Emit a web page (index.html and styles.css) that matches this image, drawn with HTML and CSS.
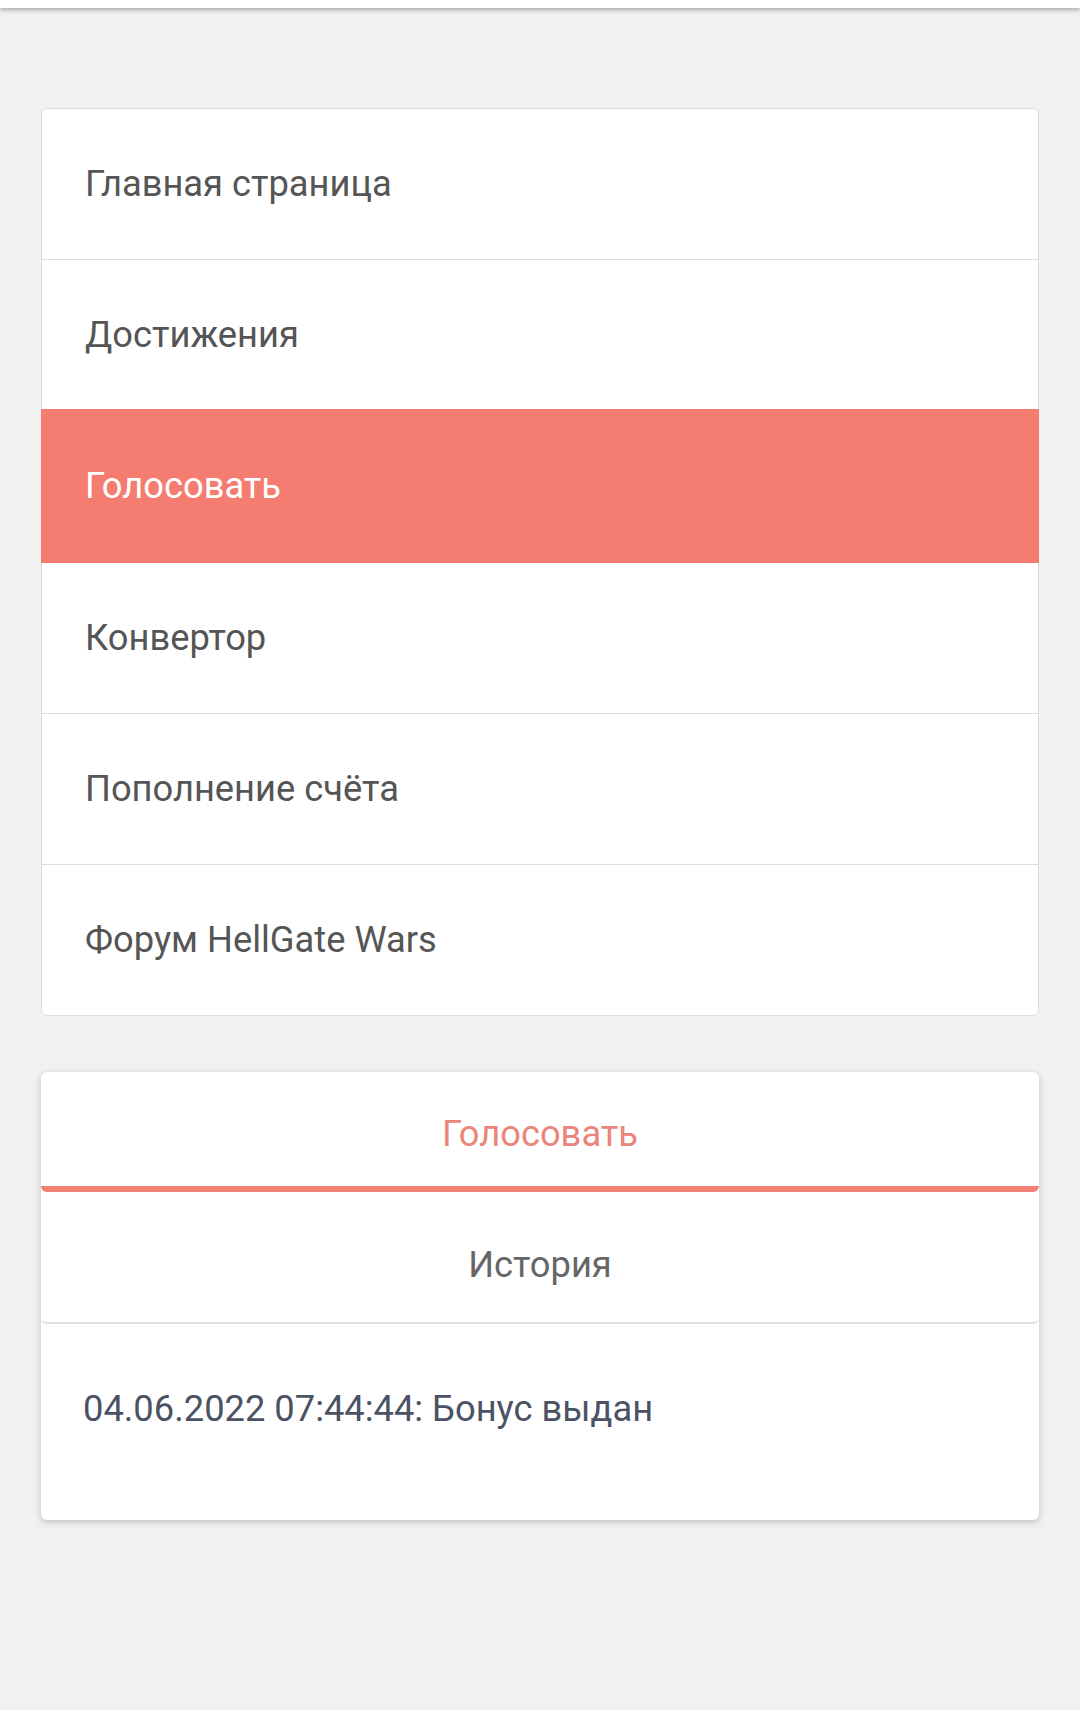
FILE: index.html
```html
<!DOCTYPE html>
<html lang="ru">
<head>
<meta charset="utf-8">
<title>Голосовать</title>
<link rel="stylesheet" href="styles.css">
</head>
<body>
<div class="topbar"></div>
<main class="page">
  <nav class="menu">
    <a class="menu-item">Главная страница</a>
    <a class="menu-item">Достижения</a>
    <a class="menu-item active">Голосовать</a>
    <a class="menu-item">Конвертор</a>
    <a class="menu-item">Пополнение счёта</a>
    <a class="menu-item">Форум HellGate Wars</a>
  </nav>
  <section class="panel">
    <div class="tab tab-active">Голосовать</div>
    <div class="tab tab-plain">История</div>
    <div class="panel-body">04.06.2022 07:44:44: Бонус выдан</div>
  </section>
</main>
</body>
</html>
```
FILE: styles.css
```css
html, body {
  margin: 0;
  padding: 0;
}
body {
  background: #f1f1f1;
  font-family: Roboto, "Noto Sans", "Liberation Sans", sans-serif;
  min-height: 1710px;
}
.topbar {
  height: 8px;
  background: #ffffff;
  box-shadow: 0 2px 4px rgba(0, 0, 0, 0.3);
  position: relative;
  z-index: 2;
}
.page {
  padding: 100px 41px 0;
}
.menu {
  background: #ffffff;
  border: 1px solid #dcdcdc;
  border-radius: 6px;
  display: flex;
  flex-direction: column;
}
.menu-item {
  display: flex;
  align-items: center;
  height: 148px;
  padding: 0 0 2px 43px;
  border-top: 1px solid #dcdcdc;
  color: #555555;
  font-size: 36.3px;
  text-decoration: none;
}
.menu-item:first-child {
  border-top: none;
}
.menu-item.active {
  background: #f47c70;
  border-top-color: #f47c70;
  color: #ffffff;
  height: 151px;
  margin: -1px -1px -1px;
  padding-left: 44px;
  position: relative;
  z-index: 1;
}
.panel {
  margin-top: 56px;
  background: #ffffff;
  border-radius: 6px;
  box-shadow: 0 2px 6px rgba(0, 0, 0, 0.22);
}
.tab {
  display: flex;
  align-items: center;
  justify-content: center;
  font-size: 36.3px;
  color: #666666;
  border-radius: 6px;
}
.tab-active {
  height: 106px;
  padding-top: 8px;
  color: #e9857a;
  border-bottom: 6px solid #ef8073;
}
.tab-plain {
  box-sizing: border-box;
  height: 132px;
  padding-top: 14px;
  border-bottom: 2px solid #e0e0e0;
}
.panel-body {
  height: 196px;
  box-sizing: border-box;
  padding: 64px 42px 0;
  font-size: 36.3px;
  line-height: 42px;
  color: #4a5263;
}
```
